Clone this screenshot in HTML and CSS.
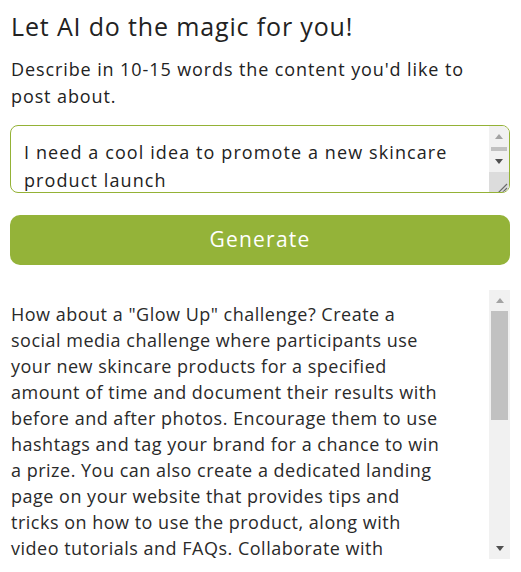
FILE: index.html
```html
<!DOCTYPE html>
<html>
<head>
<meta charset="utf-8">
<link rel="stylesheet" href="styles.css">
</head>
<body>
<main class="panel">
  <h1 class="title">Let AI do the magic for you!</h1>
  <p class="hint">Describe in 10-15 words the content you'd like to post about.</p>
  <div class="prompt-box">
    <textarea class="prompt">I need a cool idea to promote a new skincare product launch</textarea>
    <div class="sb sb-mini">
      <div class="sb-btn"><span class="arrow-up off"></span></div>
      <div class="sb-thumb mini"></div>
      <div class="sb-btn"><span class="arrow-down"></span></div>
      <div class="resizer">
        <svg width="20" height="21" viewBox="0 0 20 21"><path d="M18 12 L9 21 M18 16 L13 21" stroke="#6b6b6b" stroke-width="1.2" fill="none"/></svg>
      </div>
    </div>
  </div>
  <button class="generate">Generate</button>
  <div class="result-box">
    <div class="result">How about a "Glow Up" challenge? Create a social media challenge where participants use your new skincare products for a specified amount of time and document their results with before and after photos. Encourage them to use hashtags and tag your brand for a chance to win a prize. You can also create a dedicated landing page on your website that provides tips and tricks on how to use the product, along with video tutorials and FAQs. Collaborate with influencers and beauty bloggers in your niche to help spread the word about the launch and share their honest reviews. Offer an exclusive discount code for early buyers and run a countdown on your social channels to build excitement before launch day.</div>
    <div class="sb">
      <div class="sb-btn"><span class="arrow-up off"></span></div>
      <div class="sb-thumb big"></div>
      <div class="sb-track"></div>
      <div class="sb-btn"><span class="arrow-down"></span></div>
    </div>
  </div>
</main>
</body>
</html>
```
FILE: styles.css
```css
html, body {
  margin: 0;
  padding: 0;
  background: #ffffff;
}
body {
  font-family: "Open Sans", Lato, sans-serif;
  color: #222222;
}
.panel {
  padding: 10px 11px 0 10px;
  display: flex;
  flex-direction: column;
}
.title {
  margin: 0;
  font-size: 25px;
  font-weight: 400;
  line-height: 32px;
  letter-spacing: 0.85px;
  padding-left: 1px;
}
.hint {
  margin: 14px 0 0 1px;
  padding-right: 20px;
  font-size: 18px;
  line-height: 27px;
  letter-spacing: 0.9px;
}
.prompt-box {
  margin-top: 15px;
  height: 68px;
  box-sizing: border-box;
  border: 1px solid #94b236;
  border-radius: 8px;
  display: flex;
  overflow: hidden;
}
.prompt {
  flex: 1;
  min-width: 0;
  border: none;
  margin: 0;
  padding: 12px 13px;
  font-family: inherit;
  font-size: 18px;
  line-height: 28px;
  letter-spacing: 1.1px;
  color: #222222;
  resize: none;
  outline: none;
  overflow: hidden;
  background: transparent;
}
.sb {
  width: 21px;
  flex: none;
  background: #f1f1f1;
  display: flex;
  flex-direction: column;
}
.sb-mini {
  width: 20px;
}
.sb-btn {
  height: 21px;
  flex: none;
  display: flex;
  align-items: center;
  justify-content: center;
}
.arrow-up {
  width: 0;
  height: 0;
  border-left: 4.5px solid transparent;
  border-right: 4.5px solid transparent;
  border-bottom: 5px solid #505050;
}
.arrow-down {
  width: 0;
  height: 0;
  border-left: 4.5px solid transparent;
  border-right: 4.5px solid transparent;
  border-top: 5px solid #505050;
}
.arrow-up.off {
  border-bottom-color: #a3a3a3;
}
.sb-thumb {
  margin: 0 2px;
  background: #c1c1c1;
  flex: none;
}
.sb-thumb.mini {
  height: 4px;
}
.sb-thumb.big {
  height: 109px;
}
.sb-track {
  flex: 1;
}
.resizer {
  height: 20px;
  flex: none;
  background: #dcdcdc;
  display: flex;
}
.resizer svg {
  display: block;
}
.generate {
  margin-top: 22px;
  height: 50px;
  width: 100%;
  border: none;
  border-radius: 10px;
  background: #94b339;
  color: #ffffff;
  font-family: inherit;
  font-size: 21px;
  letter-spacing: 1.2px;
  padding: 0 0 3px 0;
  cursor: pointer;
}
.result-box {
  margin-top: 25px;
  height: 269px;
  display: flex;
  overflow: hidden;
}
.result {
  flex: 1;
  min-width: 0;
  font-size: 18px;
  line-height: 26px;
  letter-spacing: 0.5px;
  padding: 11px 42px 0 1px;
  color: #2a2a2a;
  overflow: hidden;
}
```
